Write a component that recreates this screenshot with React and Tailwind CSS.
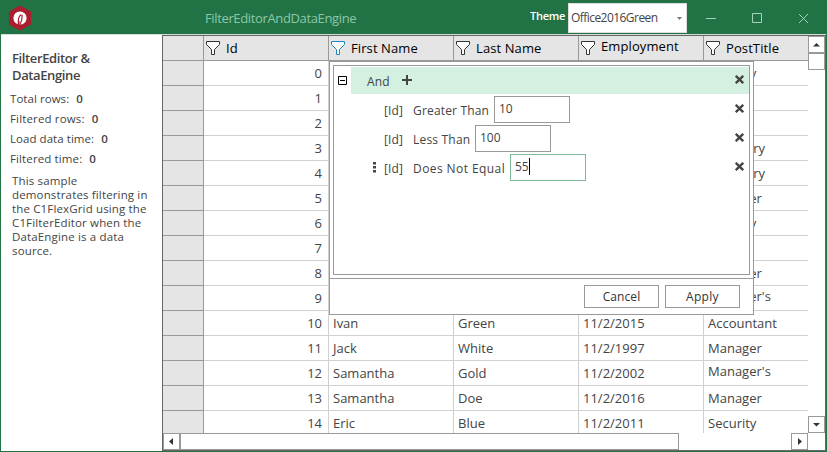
import React from "react";

const rows = [
  ["0", "", "", "", "Security"],
  ["1", "", "", "", "Driver"],
  ["2", "", "", "", "Tester"],
  ["3", "", "", "", "Secretary"],
  ["4", "", "", "", "Secretary"],
  ["5", "", "", "", "Manager"],
  ["6", "", "", "", "Security"],
  ["7", "", "", "", "Driver"],
  ["8", "", "", "", "Manager"],
  ["9", "", "", "", "Manager's"],
  ["10", "Ivan", "Green", "11/2/2015", "Accountant"],
  ["11", "Jack", "White", "11/2/1997", "Manager"],
  ["12", "Samantha", "Gold", "11/2/2002", "Manager's"],
  ["13", "Samantha", "Doe", "11/2/2016", "Manager"],
  ["14", "Eric", "Blue", "11/2/2011", "Security"],
];

function Funnel({ active }) {
  return (
    <svg width="15" height="15" viewBox="0 0 15 15" className="shrink-0">
      <path d="M.5 .5h13v3L8.500 8.500v5h-3v-5L.5 3.500z" fill="#fff" stroke={active ? "#1e88c9" : "#333"} />
    </svg>
  );
}

function Head({ text, active, raised, last }) {
  return (
    <div className={`flex h-6 items-start pl-[2px] pt-[5px] ${last ? "w-[104px]" : "w-[125px] border-r border-[#999]"}`}>
      <Funnel active={active} />
      <span className={`ml-[5px] whitespace-nowrap text-[13px] leading-[18px] tracking-[0.1px] text-black ${raised ? "-mt-[4px]" : "-mt-[2px]"}`}>{text}</span>
    </div>
  );
}

function Cell({ text, right, last, raised }) {
  return (
    <div className={`h-6 whitespace-nowrap text-[13px] leading-[24px] ${right ? "pr-[6px] text-right" : "pl-1"} ${last ? "w-[104px]" : "w-[125px] border-r border-[#d0d0d0]"}`}>
      <span className={raised ? "block leading-[20px]" : ""}>{text}</span>
    </div>
  );
}

function Stat({ label, value, spacing = "tracking-[0.05px]" }) {
  return (
    <div className="flex h-5 items-center text-[11.5px]">
      <span className={spacing}>{label}</span>
      <b className="ml-[7px] font-semibold">{value}</b>
    </div>
  );
}

function Cross() {
  return (
    <svg width="9" height="9" viewBox="0 0 9 9" className="shrink-0">
      <path d="M.8 .8l7.400 7.400M8.200 .8L.8 8.200" stroke="#444" strokeWidth="2.300" />
    </svg>
  );
}

function Condition({ op, value, focus, opWidth }) {
  return (
    <div className="flex h-[29px] items-start">
      <div className="flex w-[50px] justify-end pr-[8px] pt-2">
        {focus && (
          <svg width="3" height="11" viewBox="0 0 3 11">
            <path d="M0 0h3v2.500H0zM0 4h3v2.500H0zM0 8h3v2.500H0z" fill="#444" />
          </svg>
        )}
      </div>
      <span className="w-[29px] pt-[6px] text-[12px] leading-[18px] tracking-[0.1px]">[Id]</span>
      <span className={`whitespace-nowrap pt-[6px] text-[12px] leading-[18px] ${opWidth}`}>{op}</span>
      <div className={`flex h-[27px] w-[76px] items-start border pl-1 pt-[3px] text-[12px] leading-[18px] ${focus ? "border-[#7fba98]" : "border-[#999]"}`}>
        {value}
        {focus && <i className="h-[17px] w-px bg-black" />}
      </div>
      <div className="ml-auto pr-[5px] pt-2">
        <Cross />
      </div>
    </div>
  );
}

function Popup() {
  return (
    <div className="absolute left-[329px] top-[61px] flex h-[254px] w-[425px] flex-col border border-[#999] bg-white">
      <div className="mx-[3px] mt-[3px] flex h-[210px] flex-col border border-[#999] pt-px">
        <div className="flex h-[27px]">
          <div className="w-[17px] pl-1 pt-[9px]">
            <svg width="9" height="9" viewBox="0 0 9 9">
              <path d="M.5 .5h8v8h-8zM2 4.500h5" fill="none" stroke="#000" />
            </svg>
          </div>
          <div className="flex flex-1 items-start bg-[#d3f0e0] pl-4">
            <span className="w-[35px] pt-[6px] text-[12px] leading-[18px] tracking-[0.2px]">And</span>
            <svg width="10" height="10" viewBox="0 0 10 10" className="mt-2">
              <path d="M5 0v10M0 5h10" stroke="#444" strokeWidth="2" />
            </svg>
            <div className="ml-auto pr-[5px] pt-2">
              <Cross />
            </div>
          </div>
        </div>
        <div className="mt-[2px]">
          <Condition op="Greater Than" value="10" opWidth="w-[81px] tracking-[0.17px]" />
          <Condition op="Less Than" value="100" opWidth="w-[62px] tracking-[0.2px]" />
          <Condition op="Does Not Equal" value="55" opWidth="w-[97px] tracking-[0.42px]" focus />
        </div>
      </div>
      <div className="mt-[3px] flex flex-1 justify-end gap-[6px] border-t border-[#999] pr-[13px] pt-[6px] text-[12px] leading-[22px] text-[#333]">
        <div className="h-[23px] w-[75px] border border-[#999] text-center tracking-[0.1px]">Cancel</div>
        <div className="h-[23px] w-[75px] border border-[#999] text-center tracking-[0.3px]">Apply</div>
      </div>
    </div>
  );
}

function Arrow({ d }) {
  return (
    <svg width="9" height="9" viewBox="0 0 9 9">
      <path d={d} fill="#333" />
    </svg>
  );
}

export default function App() {
  return (
    <div className="relative flex h-[452px] w-[827px] flex-col overflow-hidden bg-[#217346] font-['Open_Sans','Noto_Sans',sans-serif] text-[#444]">
      <header className="flex h-[34px] shrink-0 items-start">
        <svg width="24" height="26" viewBox="0 0 24 26" className="ml-2 mt-[5px]">
          <path d="M12 .5l11 6v13l-11 6-11-6v-13z" fill="#aa1e30" />
          <circle cx="12" cy="13" r="6.600" fill="#fff" />
          <path d="M9.300 20.500l.7-4.500 1.600 0-.3 4.500z" fill="#aa1e30" />
          <path d="M10.300 17c-.2-3.500 .8-6 3-7.500M14.200 10c.1 3-.5 6.500-2.300 9.500" fill="none" stroke="#aa1e30" strokeWidth="1.200" />
        </svg>
        <span className="ml-[173px] w-[325px] pt-[9px] text-[13px] leading-[18px] tracking-[-0.36px] text-[#8fc6a6]">FilterEditorAndDataEngine</span>
        <span className="w-[38px] pt-2 text-[11px] font-semibold leading-4 tracking-[-0.25px] text-white">Theme</span>
        <div className="mt-[3px] flex h-[30px] w-[119px] items-center border border-[#ddd] bg-white pl-[2px] text-[12px] tracking-[-0.55px]">
          <span className="w-[106px]">Office2016Green</span>
          <svg width="5" height="3" viewBox="0 0 5 3">
            <path d="M0 0h5L2.500 3z" fill="#777" />
          </svg>
        </div>
        <svg width="102" height="11" viewBox="0 0 102 11" className="ml-[19px] mt-[13px]" fill="none" stroke="#a3d4b6">
          <path d="M0 5.500h10M46.500 .5h9v9h-9z" />
          <path d="M93 1l9 9M102 1l-9 9" />
        </svg>
      </header>
      <div className="mx-px flex h-[417px] border-t border-[#d5dcd8] bg-white">
        <aside className="w-[161px] shrink-0 pl-[9px]">
          <h1 className="ml-[2px] mt-[15px] text-[13px] font-semibold leading-[17px] tracking-[-0.38px]">FilterEditor &amp;<br />DataEngine</h1>
          <div className="mt-[5px]">
            <Stat label="Total rows:" value="0" />
            <Stat label="Filtered rows:" value="0" spacing="tracking-[0.15px]" />
            <Stat label="Load data time:" value="0" spacing="tracking-[0.05px]" />
            <Stat label="Filtered time:" value="0" spacing="tracking-[0.12px]" />
          </div>
          <p className="ml-[2px] mt-[5px] whitespace-nowrap text-[11.5px] leading-[14px] tracking-[0.15px]">
            This sample<br />demonstrates filtering in<br />the C1FlexGrid using the<br />C1FilterEditor when the<br />DataEngine is a data<br />source.
          </p>
        </aside>
        <main className="flex h-[416px] w-[664px] flex-col border border-[#666]">
          <div className="flex h-[397px]">
            <div className="w-[645px] overflow-hidden">
              <div className="flex h-[25px] border-b border-[#999] bg-[#e5e5e5]">
                <div className="w-[41px] border-r border-[#999]" />
                <Head text="Id" />
                <Head text="First Name" active />
                <Head text="Last Name" />
                <Head text="Employment" raised />
                <Head text="PostTitle" last />
              </div>
              {rows.map((r) => (
                <div key={r[0]} className="flex h-[25px]">
                  <div className="w-[41px] border-b border-r border-[#999] bg-[#e5e5e5]" />
                  <div className="flex border-b border-[#d0d0d0]">
                    <Cell text={r[0]} right />
                    <Cell text={r[1]} />
                    <Cell text={r[2]} />
                    <Cell text={r[3]} />
                    <Cell text={r[4]} last raised={r[4] === "Manager's"} />
                  </div>
                </div>
              ))}
            </div>
            <div className="flex w-[17px] flex-col">
              <div className="flex h-[17px] items-center justify-center border border-[#999]"><Arrow d="M1 6.500h7L4.500 3z" /></div>
              <div className="h-[17px] border border-[#999]" />
              <div className="mt-auto flex h-[17px] items-center justify-center border border-[#999]"><Arrow d="M1 3h7L4.500 6.500z" /></div>
            </div>
          </div>
          <div className="flex h-[17px]">
            <div className="flex w-[17px] items-center justify-center border border-[#999]"><Arrow d="M6 1v7L2 4.500z" /></div>
            <div className="w-[499px] border border-[#999]" />
            <div className="ml-auto mr-[17px] flex w-[17px] items-center justify-center border border-[#999]"><Arrow d="M3 1v7l4-3.500z" /></div>
          </div>
        </main>
      </div>
      <Popup />
    </div>
  );
}
